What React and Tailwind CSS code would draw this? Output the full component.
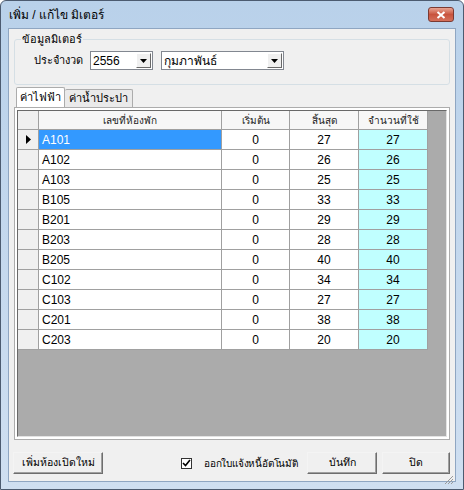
import React from 'react';

const rows = [
  ['A101', 0, 27, 27],
  ['A102', 0, 26, 26],
  ['A103', 0, 25, 25],
  ['B105', 0, 33, 33],
  ['B201', 0, 29, 29],
  ['B203', 0, 28, 28],
  ['B205', 0, 40, 40],
  ['C102', 0, 34, 34],
  ['C103', 0, 27, 27],
  ['C201', 0, 38, 38],
  ['C203', 0, 20, 20],
];

const font = { fontFamily: 'Tahoma, "Liberation Sans", "Noto Sans", sans-serif' };

const Combo = ({ value, width }) => (
  <div className={`flex h-[19px] shrink-0 items-center border border-[#828790] bg-white ${width}`}>
    <span className="flex-1 whitespace-nowrap pl-[2px] text-[12px] leading-none text-black">{value}</span>
    <div className="mr-[1px] flex h-[15px] w-[15px] items-center justify-center border border-t-white border-l-white border-b-[#696969] border-r-[#696969] bg-[#f0f0f0]">
      <svg width="7" height="4" viewBox="0 0 7 4"><path d="M0 0h7L3.5 4z" fill="#000" /></svg>
    </div>
  </div>
);

const Button = ({ children, width }) => (
  <button className={`flex h-[22px] shrink-0 items-center justify-center whitespace-nowrap border border-t-[#f4f4f4] border-l-[#f4f4f4] border-b-[#6e6e6e] border-r-[#6e6e6e] bg-[#f0f0f0] text-[10.5px] text-black shadow-[inset_-1px_-1px_0_#a0a0a0] ${width}`}>
    {children}
  </button>
);

export default function App() {
  return (
    <div style={font} className="flex h-[490px] w-[464px] flex-col overflow-hidden rounded-t-[6px] border border-[#4c5b70] bg-gradient-to-b from-[#b9d1ea] to-[#cfdff1] px-[7px] pb-[7px]">
      <div className="flex h-[27px] shrink-0 items-center justify-between">
        <span className="pl-[1px] text-[12px] text-black">เพิ่ม / แก้ไข มิเตอร์</span>
        <div className="mr-[2px] flex h-[15px] w-[26px] items-center justify-center rounded-[3px] border border-[#7b3a32] bg-gradient-to-b from-[#e8a493] via-[#c8533d] to-[#d5705b]">
          <svg width="10" height="8" viewBox="0 0 10 8"><path d="M1.5 1l7 6M8.5 1l-7 6" stroke="#fff" strokeWidth="2" /></svg>
        </div>
      </div>

      <div className="flex min-h-0 flex-1 flex-col border border-[#8fa6c2] bg-[#f0f0f0]">
        <fieldset className="mx-[5px] mt-[4px] h-[52px] shrink-0 rounded-[3px] border border-[#d5dfe5]">
          <legend className="ml-[6px] px-[1px] text-[11px] leading-[13px] text-black">ข้อมูลมิเตอร์</legend>
          <div className="mt-[5px] flex items-center">
            <span className="w-[75px] shrink-0 whitespace-nowrap pr-[7px] text-right text-[11px] text-black">ประจำงวด</span>
            <Combo value="2556" width="w-[63px]" />
            <div className="w-[8px] shrink-0" />
            <Combo value="กุมภาพันธ์" width="w-[123px]" />
          </div>
        </fieldset>

        <div className="mx-[5px] mt-[2px] flex shrink-0 items-end pl-[2px]">
          <div className="flex h-[20px] items-center whitespace-nowrap rounded-t-[2px] border border-b-0 border-[#acacac] bg-white px-[3px] text-[11px] text-black">ค่าไฟฟ้า</div>
          <div className="flex h-[18px] items-center whitespace-nowrap rounded-t-[2px] border border-b-0 border-l-0 border-[#acacac] bg-[#eaeaea] px-[4px] text-[11px] text-black">ค่าน้ำประปา</div>
        </div>
        <div className="mx-[5px] flex h-[333px] shrink-0 border border-[#acacac] bg-white p-[2px]">
          <div className="flex flex-1 flex-col border border-t-[#696969] border-l-[#696969] border-b-[#e3e3e3] border-r-[#e3e3e3] bg-[#ababab]">
            <div className="flex h-[19px] w-[410px] text-[10px] text-[#222]">
              <div className="w-[21px] border-b border-r border-[#a0a0a0] bg-[#f0f0f0]" />
              <div className="flex w-[183px] items-center justify-center border-b border-r border-[#a0a0a0] bg-[#f7f7f7]">เลขที่ห้องพัก</div>
              <div className="flex w-[68px] items-center justify-center border-b border-r border-[#a0a0a0] bg-[#f7f7f7]">เริ่มต้น</div>
              <div className="flex w-[69px] items-center justify-center border-b border-r border-[#a0a0a0] bg-[#f7f7f7]">สิ้นสุด</div>
              <div className="flex w-[69px] items-center justify-center border-b border-r border-[#a0a0a0] bg-[#f7f7f7]">จำนวนที่ใช้</div>
            </div>
            {rows.map((r, i) => (
              <div key={r[0]} className="flex h-[20px] w-[410px] text-[12px] text-black" style={{ fontFamily: '"Liberation Sans", Arial, sans-serif' }}>
                <div className="flex w-[21px] items-center justify-center border-b border-r border-[#a0a0a0] bg-[#f0f0f0]">
                  {i === 0 && <svg width="5" height="9" viewBox="0 0 5 9"><path d="M0 0l5 4.5L0 9z" fill="#000" /></svg>}
                </div>
                <div className={`flex w-[183px] items-center border-b border-r border-[#a0a0a0] pl-[3px] ${i === 0 ? 'bg-[#3399ff] text-white' : 'bg-white'}`}>{r[0]}</div>
                <div className="flex w-[68px] items-center justify-center border-b border-r border-[#a0a0a0] bg-white">{r[1]}</div>
                <div className="flex w-[69px] items-center justify-center border-b border-r border-[#a0a0a0] bg-white">{r[2]}</div>
                <div className="flex w-[69px] items-center justify-center border-b border-r border-[#a0a0a0] bg-[#c0ffff]">{r[3]}</div>
              </div>
            ))}
          </div>
        </div>

        <div className="mt-[12px] flex shrink-0 items-center px-[4px]">
          <Button width="w-[90px]">เพิ่มห้องเปิดใหม่</Button>
          <div className="ml-[78px] flex h-[11px] w-[11px] shrink-0 items-center justify-center border border-[#333] bg-white">
            <svg width="9" height="8" viewBox="0 0 9 8"><path d="M1 4l2.5 2.5L8 1" stroke="#000" strokeWidth="1.6" fill="none" /></svg>
          </div>
          <span className="ml-[12px] w-[103px] shrink-0 whitespace-nowrap text-[10px] tracking-[-0.2px] text-black">ออกใบแจ้งหนี้อัตโนมัติ</span>
          <Button width="w-[70px]">บันทึก</Button>
          <div className="w-[5px] shrink-0" />
          <Button width="w-[68px]">ปิด</Button>
        </div>
        <div className="flex flex-1 items-end justify-end">
          <svg width="11" height="11" viewBox="0 0 11 11" className="mb-[1px] mr-[1px]">
            <path d="M10 2L2 10M10 5L5 10M10 8L8 10" stroke="#9a9a9a" strokeWidth="1" />
          </svg>
        </div>
      </div>
    </div>
  );
}
